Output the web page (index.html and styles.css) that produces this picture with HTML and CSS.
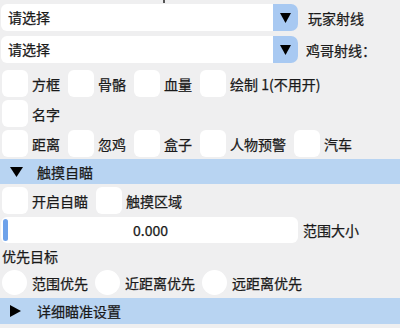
FILE: index.html
```html
<!DOCTYPE html>
<html>
<head>
<meta charset="utf-8">
<link rel="stylesheet" href="styles.css">
</head>
<body>
<div class="panel">
  <div class="topcut"><span class="mark"></span></div>

  <div class="combo-row first">
    <div class="combo">
      <div class="combo-field">请选择</div>
      <div class="combo-btn"><svg width="11" height="10" viewBox="0 0 11 10"><polygon points="0,0 11,0 5.5,10" fill="#000"/></svg></div>
    </div>
    <span class="combo-label">玩家射线</span>
  </div>

  <div class="combo-row second">
    <div class="combo">
      <div class="combo-field">请选择</div>
      <div class="combo-btn"><svg width="11" height="10" viewBox="0 0 11 10"><polygon points="0,0 11,0 5.5,10" fill="#000"/></svg></div>
    </div>
    <span class="combo-label l2">鸡哥射线：</span>
  </div>

  <div class="row r1">
    <span class="item"><span class="cb"></span>方框</span>
    <span class="item"><span class="cb"></span>骨骼</span>
    <span class="item"><span class="cb"></span>血量</span>
    <span class="item"><span class="cb"></span>绘制 1(不用开)</span>
  </div>

  <div class="row r2">
    <span class="item"><span class="cb"></span>名字</span>
  </div>

  <div class="row r3">
    <span class="item"><span class="cb"></span>距离</span>
    <span class="item"><span class="cb"></span>忽鸡</span>
    <span class="item"><span class="cb"></span>盒子</span>
    <span class="item"><span class="cb"></span>人物预警</span>
    <span class="item"><span class="cb"></span>汽车</span>
  </div>

  <div class="header h1">
    <svg width="13" height="10" viewBox="0 0 13 10"><polygon points="0,0 13,0 6.5,10" fill="#000"/></svg>
    <span class="header-text">触摸自瞄</span>
  </div>

  <div class="row r4">
    <span class="item"><span class="cb"></span>开启自瞄</span>
    <span class="item"><span class="cb"></span>触摸区域</span>
  </div>

  <div class="slider-row">
    <div class="slider">
      <span class="grab"></span>
      <span class="slider-value">0.000</span>
    </div>
    <span class="slider-label">范围大小</span>
  </div>

  <div class="text-row">优先目标</div>

  <div class="row radios">
    <span class="item"><span class="rb"></span>范围优先</span>
    <span class="item"><span class="rb"></span>近距离优先</span>
    <span class="item"><span class="rb"></span>远距离优先</span>
  </div>

  <div class="header h2">
    <svg class="tri-r" width="11" height="12" viewBox="0 0 11 12"><polygon points="0,0 11,6 0,12" fill="#000"/></svg>
    <span class="header-text t2">详细瞄准设置</span>
  </div>
</div>
</body>
</html>
```

FILE: styles.css
```css
html, body {
  margin: 0;
  padding: 0;
  background: #efeff0;
}

body {
  font-family: "Noto Sans CJK SC", "Noto Sans", sans-serif;
  font-size: 14px;
  color: #1a1a1a;
  -webkit-text-stroke: 0.25px #1a1a1a;
  width: 400px;
  height: 328px;
  overflow: hidden;
}

.panel {
  display: flex;
  flex-direction: column;
}

.topcut {
  height: 4px;
  display: flex;
}

.mark {
  margin-left: 163px;
  width: 2px;
  height: 3px;
  background: #555;
}

.combo-row {
  display: flex;
  align-items: center;
  height: 27px;
}

.combo-row.second {
  margin-top: 5px;
}

.combo {
  display: flex;
  height: 27px;
  width: 297px;
  margin-left: 1px;
}

.combo-field {
  flex: 1;
  background: #ffffff;
  border-radius: 6px 0 0 6px;
  padding-left: 7px;
  line-height: 27px;
}

.combo-btn {
  width: 25px;
  background: #a8c9f2;
  border-radius: 0 7px 7px 0;
  display: flex;
  align-items: center;
  justify-content: center;
}

.combo-label {
  margin-left: 10px;
}

.combo-label.l2 {
  margin-left: 8px;
}

.row {
  display: flex;
  align-items: center;
  height: 27px;
  padding-left: 2px;
  margin-top: 3px;
}

.row.r1 {
  margin-top: 7px;
}

.item {
  display: flex;
  align-items: center;
  margin-right: 8px;
  white-space: nowrap;
}

.cb {
  width: 26px;
  height: 27px;
  background: #ffffff;
  border-radius: 6px;
  margin-right: 4px;
}

.header {
  display: flex;
  align-items: center;
  height: 25px;
  background: #b8d4f2;
  padding-left: 10px;
  margin-top: 2px;
}

.header-text {
  margin-left: 14px;
}

.header.h2 {
  height: 26px;
  margin-top: 3px;
}

.header-text.t2 {
  margin-left: 16px;
}

.slider-row {
  display: flex;
  align-items: center;
  height: 26px;
  margin-top: 3px;
}

.slider {
  display: grid;
  width: 297px;
  height: 26px;
  margin-left: 1px;
  background: #ffffff;
  border-radius: 6px;
}

.grab {
  grid-area: 1 / 1;
  justify-self: start;
  align-self: center;
  width: 5px;
  height: 22px;
  margin-left: 2px;
  border-radius: 3px;
  background: #6ea2ea;
}

.slider-value {
  grid-area: 1 / 1;
  justify-self: center;
  align-self: center;
  line-height: 26px;
  margin-left: 2px;
}

.slider-label {
  margin-left: 5px;
}

.text-row {
  height: 27px;
  line-height: 27px;
  padding-left: 2px;
}

.row.radios {
  margin-top: 0;
  height: 25px;
}

.rb {
  width: 25px;
  height: 25px;
  background: #ffffff;
  border-radius: 50%;
  margin-right: 5px;
}

.radios .item {
  margin-right: 7px;
}
```
